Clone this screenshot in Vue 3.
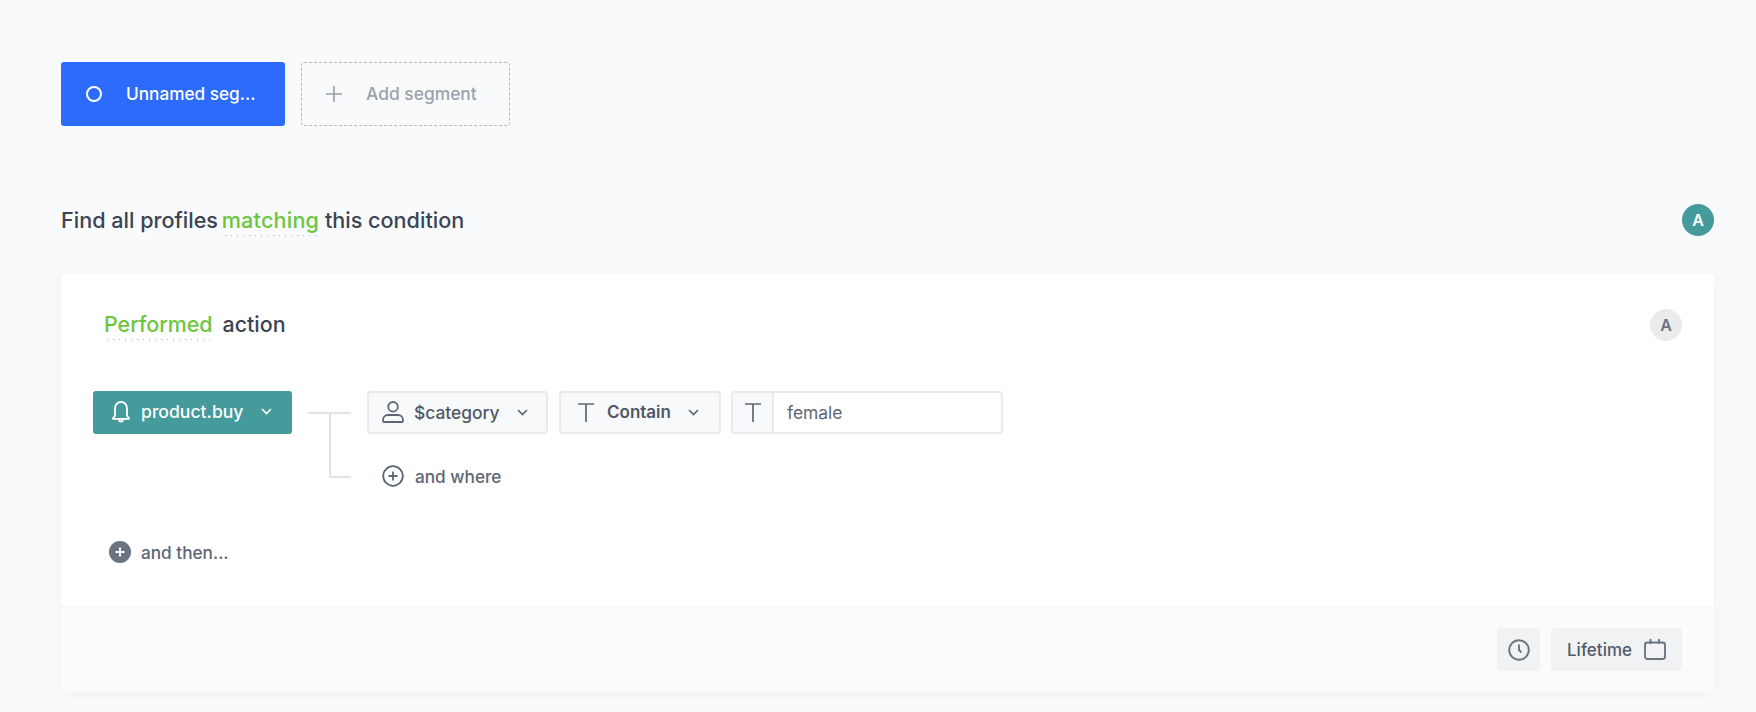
<template>
  <div class="page">
    <div class="tabs">
      <div class="tab active">
        <span class="ring"></span>
        <span class="tab-label">Unnamed seg...</span>
      </div>
      <div class="tab add">
        <svg class="plus" width="16" height="16" viewBox="0 0 16 16"><path d="M8 0v16M0 8h16" stroke="currentColor" stroke-width="1.7" fill="none" /></svg>
        <span class="tab-label">Add segment</span>
      </div>
    </div>

    <div class="heading">
      <div class="heading-text">
        Find all profiles <span class="dotted matching">matching</span> this condition
      </div>
      <span class="badge teal">A</span>
    </div>

    <div class="card">
      <div class="card-body">
        <div class="card-head">
          <div class="card-title"><span class="dotted performed">Performed</span><span class="action">action</span></div>
          <span class="badge grey">A</span>
        </div>

        <div class="builder">
          <button class="event">
            <svg width="18" height="23" viewBox="0 0 18 23" fill="none" stroke="#fff" stroke-width="1.8">
              <path d="M3 16V8a6 6 0 0 1 12 0v8l1.800 1.900c.4.500.2 1-.4 1H1.600c-.6 0-.8-.5-.4-1z" stroke-linejoin="round" />
              <path d="M7 19.500a2 2 0 0 0 4 0" />
            </svg>
            <span>product.buy</span>
            <svg class="chev" width="11" height="7" viewBox="0 0 11 7" fill="none" stroke="#fff" stroke-width="1.7"><path d="M1 1l4.500 4.500L10 1" /></svg>
          </button>

          <div class="connector">
            <div class="line-top"></div>
            <div class="line-down"></div>
          </div>

          <div class="conditions">
            <div class="row">
              <button class="select category">
                <svg width="22" height="22" viewBox="0 0 22 22" fill="none" stroke="#5d6675" stroke-width="1.8">
                  <circle cx="11" cy="5.800" r="4.800" />
                  <path d="M1 19c0-3 2.200-5 5-5h10c2.800 0 5 2 5 5v1c0 .6-.4 1-1 1H2c-.6 0-1-.4-1-1z" />
                </svg>
                <span>$category</span>
                <svg class="chev" width="11" height="7" viewBox="0 0 11 7" fill="none" stroke="#5d6675" stroke-width="1.7"><path d="M1 1l4.500 4.500L10 1" /></svg>
              </button>
              <button class="select contain">
                <svg width="16" height="19" viewBox="0 0 16 19" fill="none" stroke="#5d6675" stroke-width="1.7"><path d="M0 1h16M8 1v18" /></svg>
                <span>Contain</span>
                <svg class="chev" width="11" height="7" viewBox="0 0 11 7" fill="none" stroke="#5d6675" stroke-width="1.7"><path d="M1 1l4.500 4.500L10 1" /></svg>
              </button>
              <div class="field">
                <div class="field-icon">
                  <svg width="16" height="19" viewBox="0 0 16 19" fill="none" stroke="#5d6675" stroke-width="1.7"><path d="M0 1h16M8 1v18" /></svg>
                </div>
                <div class="field-value">female</div>
              </div>
            </div>
            <div class="and-where">
              <svg width="22" height="22" viewBox="0 0 22 22" fill="none" stroke="#5d6675" stroke-width="1.8">
                <circle cx="11" cy="11" r="9.800" />
                <path d="M11 6.500v9M6.500 11h9" />
              </svg>
              <span>and where</span>
            </div>
          </div>
        </div>

        <div class="and-then">
          <span class="filled-plus">
            <svg width="12" height="12" viewBox="0 0 12 12" fill="none" stroke="#fff" stroke-width="2"><path d="M6 1.500v9M1.500 6h9" /></svg>
          </span>
          <span>and then...</span>
        </div>
      </div>

      <div class="card-foot">
        <button class="foot-btn clock">
          <svg width="22" height="22" viewBox="0 0 22 22" fill="none" stroke="#6b7483" stroke-width="1.9">
            <circle cx="11" cy="11" r="9.800" />
            <path d="M11 5.500V11l2.500 2.500" />
          </svg>
        </button>
        <button class="foot-btn lifetime">
          <span>Lifetime</span>
          <svg width="22" height="21" viewBox="0 0 22 21" fill="none" stroke="#6b7483" stroke-width="1.9">
            <rect x="1" y="3.500" width="20" height="16.500" rx="2.500" />
            <path d="M6.500 0v5M15 0v5" />
          </svg>
        </button>
      </div>
    </div>
  </div>
</template>

<script setup>
</script>

<style>
html, body { background: #f9fafc; }
</style>

<style scoped>
.page {
  box-sizing: border-box;
  width: 1756px; height: 712px; overflow: hidden;
  padding: 62px 42px 0 61px;
  background: #f9fafc;
  font-family: Inter, "Liberation Sans", sans-serif;
  font-weight: 500;
  color: #3b4453;
}
button { font: inherit; margin: 0; cursor: pointer; }

.tabs { display: flex; gap: 16px; }
.tab {
  box-sizing: border-box;
  height: 64px; display: flex; align-items: center;
  font-size: 17.2px; border-radius: 3px;
  padding-bottom: 1px;
}
.tab.active { width: 224px; background: #2c6bfb; color: #fff; padding-left: 25px; }
.tab.add { width: 209px; border: 1px dashed #b6b9bd; color: #9ca2aa; padding-left: 24px; }
.tab.add .tab-label { font-size: 17.4px; }
.ring { box-sizing: border-box; width: 16px; height: 16px; border: 2px solid #fff; border-radius: 50%; margin-right: 24px; }
.plus { margin-right: 24px; }

.heading {
  display: flex; align-items: center; justify-content: space-between;
  margin-top: 78px; height: 32px;
}
.heading-text { font-size: 21.6px; }
.dotted { color: #6cc63c; position: relative; }
.dotted.matching { letter-spacing: .2px; margin-left: -2px; }
.dotted::after {
  content: ""; position: absolute; left: 3px; right: 0; bottom: -3px; height: 1px;
  background-image: linear-gradient(to right, #9ccd7c 1px, transparent 1px);
  background-size: 6px 1px;
}
.badge {
  width: 32px; height: 32px; border-radius: 50%;
  display: flex; align-items: center; justify-content: center;
  font-size: 16px; font-weight: 600;
}
.badge.teal { background: #459a9b; color: #fff; }
.badge.grey { background: #e9ebed; color: #6b7380; position: relative; top: 3px; }

.card {
  margin-top: 38px; background: #fff; border-radius: 3px;
  box-shadow: 0 2px 12px rgba(60, 70, 90, .05);
}
.card-body { box-sizing: border-box; height: 333px; padding: 32px 32px 0 32px; border-bottom: 1px solid #f1f2f4; }
.card-head { display: flex; align-items: center; justify-content: space-between; height: 32px; }
.card-title { font-size: 21.4px; padding-left: 11px; position: relative; top: 2px; }
.action { margin-left: 10px; }

.builder { display: flex; align-items: flex-start; margin-top: 53px; }
.event {
  box-sizing: border-box; width: 199px; height: 43px;
  display: flex; align-items: center; padding: 0 0 2px 19px;
  border: 0; border-radius: 3px; background: #459a9b; color: #fff; font-size: 17.6px;
}
.event span { margin-left: 11px; }
.event .chev { margin-left: 17px; }

.connector { position: relative; width: 43px; height: 87px; margin: 21px 16px 0 16px; }
.line-top { height: 2px; background: #e0e3e7; }
.line-down {
  box-sizing: border-box; width: 22px; height: 64px; margin-left: 21px;
  border-left: 2px solid #e0e3e7; border-bottom: 2px solid #e0e3e7;
}

.conditions { display: flex; flex-direction: column; }
.row { display: flex; gap: 11px; }
.select {
  box-sizing: border-box; height: 43px;
  display: flex; align-items: center;
  border: 2px solid #e8eaed; border-radius: 4px; background: #f8f9fb;
  color: #4f5866; font-size: 17.4px;
  padding-bottom: 2px;
}
.category { width: 181px; padding-left: 13px; padding-right: 0; }
.category span { margin-left: 10px; }
.category .chev { margin-left: 17px; }
.contain { width: 162px; padding-left: 17px; padding-right: 0; }
.contain span { margin-left: 13px; font-weight: 600; font-size: 17px; }
.contain .chev { margin-left: 17px; }
.field {
  box-sizing: border-box; width: 272px; height: 43px; margin-left: -1px;
  display: flex; border: 2px solid #e8eaed; border-radius: 4px; background: #fff;
}
.field-icon {
  width: 41px; display: flex; align-items: center; justify-content: center;
  background: #f8f9fb; border-right: 2px solid #e8eaed; box-sizing: border-box;
}
.field-value { display: flex; align-items: center; padding-left: 13px; font-size: 17.4px; font-weight: 400; color: #5d6675; }

.and-where {
  display: flex; align-items: center; gap: 11px; margin-top: 31px; height: 22px; padding-left: 15px;
  font-size: 17.2px; color: #5d6675;
}
.and-then {
  display: flex; align-items: center; gap: 10px; margin-top: 42px; padding-left: 16px;
  font-size: 17.2px; color: #5d6675; height: 22px;
}
.filled-plus {
  width: 22px; height: 22px; border-radius: 50%; background: #6b7483;
  display: flex; align-items: center; justify-content: center;
}

.card-foot {
  box-sizing: border-box; height: 85px; padding: 21px 32px 0 0;
  display: flex; justify-content: flex-end; gap: 11px;
  background: #fbfbfc; border-radius: 0 0 3px 3px;
}
.foot-btn {
  box-sizing: border-box; height: 43px; border: 0; border-radius: 4px; background: #f1f2f4;
  display: flex; align-items: center; justify-content: center;
  color: #525b69; font-size: 17px;
}
.clock { width: 43px; }
.lifetime { width: 131px; gap: 12px; }
</style>
